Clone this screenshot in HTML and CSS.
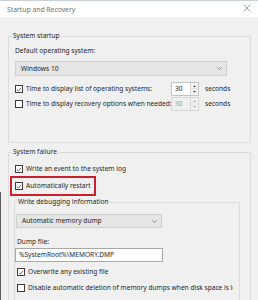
FILE: index.html
```html
<!DOCTYPE html>
<html lang="en">
  <head>
    <meta charset="UTF-8" />
    <title>Startup and Recovery</title>
    <link rel="stylesheet" href="styles.css">
  </head>
  <body>
    <div class="window">
      <div class="titlebar">
        <span class="title">Startup and Recovery</span>
        <svg class="close" width="8" height="8" viewBox="0 0 8 8">
          <path d="M0.5 0.5 L7.5 7.5 M7.5 0.5 L0.5 7.5" stroke="#8a8a8a" stroke-width="0.8" fill="none" />
        </svg>
      </div>

      <div class="content">
        <fieldset class="group startup">
          <legend>System startup</legend>
          <div class="label os-label">Default operating system:</div>
          <div class="combo os-combo">
            <span>Windows 10</span>
            <svg class="caret" width="5" height="3" viewBox="0 0 5 3">
              <path d="M0.3 0.3 L2.5 2.6 L4.7 0.3" stroke="#666" stroke-width="0.7" fill="none" />
            </svg>
          </div>

          <div class="row spin-row first">
            <span class="check on">
              <svg width="7" height="7" viewBox="0 0 7 7"><path d="M1 3.6 L2.7 5.3 L6 1.6" stroke="#222" stroke-width="0.8" fill="none" /></svg>
            </span>
            <span class="spin-label">Time to display list of operating systems:</span>
            <span class="spin">
              <span class="spin-value">30</span>
              <span class="spin-arrows">
                <svg width="7" height="12" viewBox="0 0 7 12">
                  <path d="M2 4 L3.5 2.4 L5 4 Z M2 8 L3.5 9.6 L5 8 Z" fill="#333" />
                  <path d="M0.5 6 L6.5 6" stroke="#cfcfcf" stroke-width="0.6" />
                </svg>
              </span>
            </span>
            <span class="unit">seconds</span>
          </div>

          <div class="row spin-row">
            <span class="check"></span>
            <span class="spin-label">Time to display recovery options when needed:</span>
            <span class="spin disabled">
              <span class="spin-value">30</span>
              <span class="spin-arrows">
                <svg width="7" height="12" viewBox="0 0 7 12">
                  <path d="M2 4 L3.5 2.4 L5 4 Z M2 8 L3.5 9.6 L5 8 Z" fill="#9a9a9a" />
                  <path d="M0.5 6 L6.5 6" stroke="#dadada" stroke-width="0.6" />
                </svg>
              </span>
            </span>
            <span class="unit">seconds</span>
          </div>
        </fieldset>

        <fieldset class="group failure">
          <legend>System failure</legend>
          <div class="row event-row">
            <span class="check on">
              <svg width="7" height="7" viewBox="0 0 7 7"><path d="M1 3.6 L2.7 5.3 L6 1.6" stroke="#222" stroke-width="0.8" fill="none" /></svg>
            </span>
            <span>Write an event to the system log</span>
          </div>

          <div class="highlight">
            <div class="row">
              <span class="check on">
                <svg width="7" height="7" viewBox="0 0 7 7"><path d="M1 3.6 L2.7 5.3 L6 1.6" stroke="#222" stroke-width="0.8" fill="none" /></svg>
              </span>
              <span>Automatically restart</span>
            </div>
          </div>

          <fieldset class="group debug">
            <legend>Write debugging information</legend>
            <div class="combo dump-combo">
              <span>Automatic memory dump</span>
              <svg class="caret" width="5" height="3" viewBox="0 0 5 3">
                <path d="M0.3 0.3 L2.5 2.6 L4.7 0.3" stroke="#666" stroke-width="0.7" fill="none" />
              </svg>
            </div>
            <div class="label dump-label">Dump file:</div>
            <div class="textbox">%SystemRoot%\MEMORY.DMP</div>
            <div class="row overwrite-row">
              <span class="check on">
                <svg width="7" height="7" viewBox="0 0 7 7"><path d="M1 3.6 L2.7 5.3 L6 1.6" stroke="#222" stroke-width="0.8" fill="none" /></svg>
              </span>
              <span>Overwrite any existing file</span>
            </div>
            <div class="row disable-row">
              <span class="check"></span>
              <span class="clip">Disable automatic deletion of memory dumps when disk space is low</span>
            </div>
          </fieldset>
        </fieldset>
      </div>
    </div>
  </body>
</html>
```

FILE: styles.css
```css
* {
  margin: 0;
  padding: 0;
  box-sizing: border-box;
}
html,
body {
  height: 100%;
  overflow: hidden;
}
body {
  /* dark window edge down the lower left side */
  background: linear-gradient(to bottom, transparent 192px, #5e5e5e 192px) no-repeat 0 0 / 1px 100%, #f0f0f0;
  color: #1e1e1e;
  font-family: "Noto Sans", "Open Sans", sans-serif;
  font-size: 6.6px;
  line-height: 10px;
}
.window {
  height: 100%;
  border-top: 1px solid #c9d0d8;
}
/* title bar */
.titlebar {
  height: 16px;
  background: #fff;
  display: flex;
  align-items: center;
  justify-content: space-between;
  padding: 1px 7px 0 7px;
}
.title {
  color: #707070;
  font-size: 6.8px;
}
.close {
  display: block;
  margin-top: -3px;
}
.content {
  padding: 0 7px 0 8px;
}
/* group boxes */
.group {
  border: 1px solid #dcdcdc;
  padding: 0;
  min-width: 0;
}
.group legend {
  margin-left: 3px;
  padding: 0 1px;
  line-height: 10px;
}
.startup {
  margin-top: 14px;
  padding-bottom: 31px;
}
.failure {
  margin-top: 4px;
  border-bottom: none;
  height: 160px;
}
.debug {
  margin: 1px 10px 0 5px;
  border-bottom: none;
  height: 120px;
}
.debug legend {
  margin-left: 2px;
}
.label {
  margin-left: 6px;
}
.os-label {
  margin-top: 5px;
}
/* combo boxes */
.combo {
  height: 15px;
  background: #e5e5e5;
  border: 1px solid #d0d0d0;
  display: flex;
  align-items: center;
  justify-content: space-between;
  padding: 0 4px 0 5px;
}
.os-combo {
  margin: 5px 0 0 6px;
  width: 212px;
}
.dump-combo {
  margin: 7px 0 0 1px;
  width: 146px;
  height: 14px;
}
.caret {
  display: block;
}
/* rows with checkboxes */
.row {
  display: flex;
  align-items: center;
  height: 14px;
  white-space: nowrap;
}
.check {
  width: 8px;
  height: 8px;
  border: 1px solid #3c3c3c;
  background: #fff;
  margin-right: 3px;
  flex: none;
  display: flex;
  align-items: center;
  justify-content: center;
}
.check svg {
  display: block;
}
.spin-row {
  margin-left: 6px;
  margin-top: 1px;
}
.spin-row.first {
  margin-top: 6px;
}
.spin-label {
  width: 145px;
  overflow: hidden;
}
.spin {
  display: flex;
  height: 14px;
  width: 28px;
  border: 1px solid #c4c4c4;
  background: #fff;
}
.spin-value {
  flex: 1;
  padding-left: 3px;
  line-height: 12px;
}
.spin-arrows {
  width: 8px;
  border-left: 1px solid #d6d6d6;
  background: #f3f3f3;
  display: flex;
  align-items: center;
}
.spin.disabled {
  background: #f0f0f0;
  border-color: #d8d8d8;
}
.spin.disabled .spin-value {
  color: #9a9a9a;
}
.unit {
  margin-left: 6px;
}
.event-row {
  margin: 5px 0 0 6px;
}
/* red marker round the restart option */
.highlight {
  display: inline-block;
  margin-left: 1px;
  border: 2px solid #c8202c;
  padding: 1px 3px 1px 3px;
  vertical-align: top;
}
.dump-label {
  margin: 9px 0 0 2px;
}
.textbox {
  margin-top: 1px;
  width: 148px;
  height: 14px;
  border: 1px solid #a8a8a8;
  background: #fff;
  padding-left: 3px;
  line-height: 12px;
  white-space: nowrap;
}
.overwrite-row {
  margin: 3px 0 0 2px;
}
.disable-row {
  margin: 2px 0 0 2px;
  width: 216px;
  overflow: hidden;
}
.clip {
  overflow: hidden;
}
```
